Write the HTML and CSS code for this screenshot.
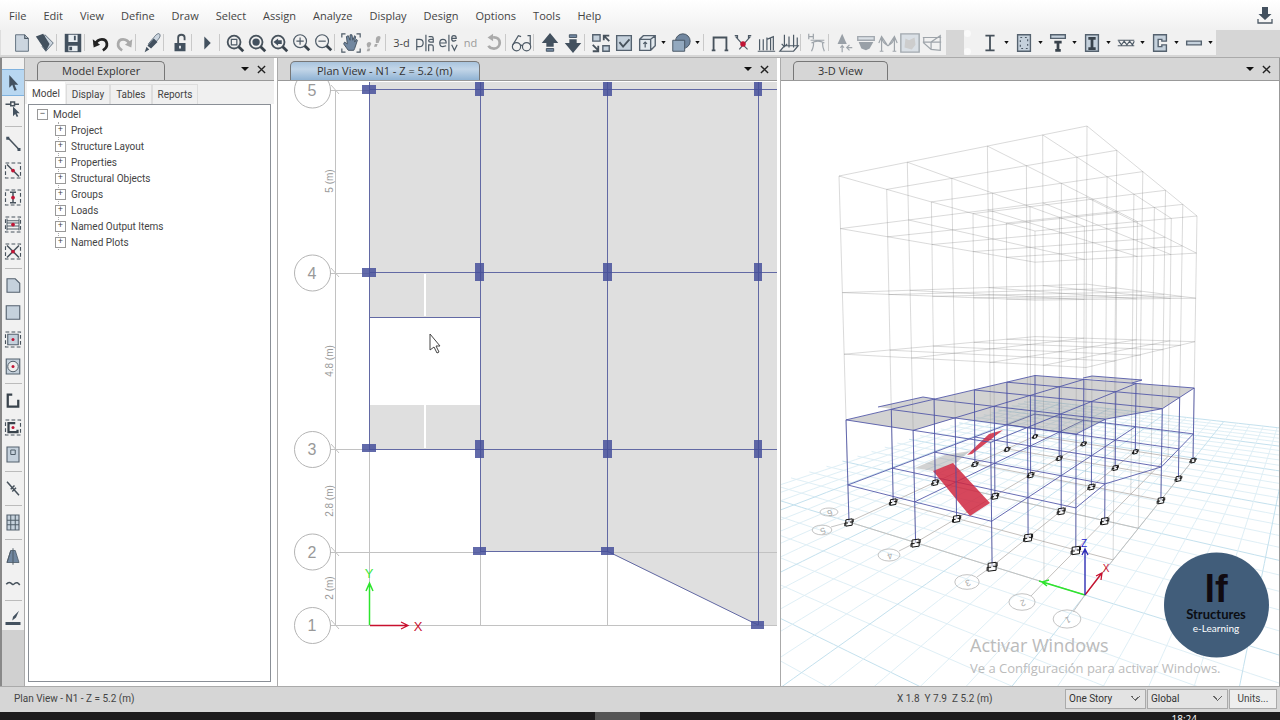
FILE: index.html
```html
<!DOCTYPE html>
<html lang="en">
<head>
<meta charset="utf-8">
<title>Plan View - N1</title>
<link rel="stylesheet" href="styles.css">
</head>
<body>
<div class="app">
<header class="menubar">
  <nav class="menus">
    <button>File</button><button>Edit</button><button>View</button><button>Define</button><button>Draw</button><button>Select</button><button>Assign</button><button>Analyze</button><button>Display</button><button>Design</button><button>Options</button><button>Tools</button><button>Help</button>
  </nav>
  <button class="tray" aria-label="Download"><svg viewBox="0 0 16 18"><path class="k" d="M5 1h6v7h3.500L8 14 1.500 8H5z"/><path class="s" d="M1 13v4h14v-4"/></svg></button>
</header>

<div class="toolrow">
 <div class="toolbar main-tools">
  <button aria-label="New"><svg viewBox="0 0 24 24"><path class="p" d="M5 3h10l4 4v14H5z"/><path class="s" d="M15 3v4h4"/></svg></button>
  <button aria-label="Open"><svg viewBox="0 0 24 24"><path class="p" d="M12 3l9 9-8 9-4-5z"/><path class="k" d="M2 5l8-3 7 11-4 8z"/></svg></button>
  <i></i>
  <button aria-label="Save"><svg viewBox="0 0 24 24"><path class="k" d="M3 2h18v20H3z"/><path class="w" d="M7 3h10v8H7zM7 15h10v6H7z"/><path class="k" d="M13 4h2v5h-2zM8 16h3v4H8z"/></svg></button>
  <i></i>
  <button aria-label="Undo"><svg viewBox="0 0 24 24"><path class="arc" d="M14 20c7-4 5-12-1-12-4 0-6 2-8 6"/><path class="b" d="M3 8l1 9 7-3z"/></svg></button>
  <button aria-label="Redo"><svg viewBox="0 0 24 24"><path class="arc dim" d="M10 20C3 16 5 8 11 8c4 0 6 2 8 6"/><path class="g" d="M21 8l-1 9-7-3z"/></svg></button>
  <i></i>
  <button aria-label="Refresh"><svg viewBox="0 0 24 24"><path class="p" d="M20 2c2 2 0 5-3 8l-6 6-3-3 6-7c2-3 5-5 6-4z"/><path class="k" d="M14 7l4 4-7 7-4-3zM6 16l3 3-5 3z"/></svg></button>
  <i></i>
  <button aria-label="Unlock"><svg viewBox="0 0 24 24"><path class="k" d="M6 12h12v9H6z"/><path class="s2" d="M10 12V6c0-4 7-4 7 0v3"/><path class="w" d="M11 15h2v3h-2z"/></svg></button>
  <i></i>
  <button aria-label="Run"><svg viewBox="0 0 24 24"><path class="k" d="M8 5l7 7-7 7z"/></svg></button>
  <i></i>
  <span class="compact">
  <button aria-label="Rubber band zoom"><svg viewBox="0 0 24 24"><circle class="s2" cx="11" cy="11" r="7"/><path class="s" d="M8 8h6v6H8z"/><path class="s3" d="M16 16l5 5"/></svg></button>
  <button aria-label="Full view"><svg viewBox="0 0 24 24"><circle class="s2" cx="11" cy="11" r="7"/><circle class="k" cx="11" cy="11" r="4"/><path class="s3" d="M16 16l5 5"/></svg></button>
  <button aria-label="Previous zoom"><svg viewBox="0 0 24 24"><circle class="s2" cx="11" cy="11" r="7"/><path class="k" d="M6 11l5-4v2h4v4h-4v2z"/><path class="s3" d="M16 16l5 5"/></svg></button>
  <button aria-label="Zoom in"><svg viewBox="0 0 24 24"><circle class="s" cx="11" cy="10" r="7"/><path class="s" d="M7 10h8M11 6v8"/><path class="s3" d="M16 15l5 5"/></svg></button>
  <button aria-label="Zoom out"><svg viewBox="0 0 24 24"><circle class="s" cx="11" cy="10" r="7"/><path class="s" d="M7 10h8"/><path class="s3" d="M16 15l5 5"/></svg></button>
  </span>
  <i></i>
  <button aria-label="Pan"><svg viewBox="0 0 24 24"><path class="s" d="M2 6V2h4M18 2h4v4M2 18v4h4M18 22h4v-4"/><path class="m" d="M9 20l-5-7 1-2 3 2-1-8 2-1 2 5V3h2l1 6 2-5 1 1-1 6 2-3 1 1-3 9-1 2z"/></svg></button>
  <button aria-label="Walk"><svg viewBox="0 0 24 24"><path class="g" d="M4 14c0-4 5-4 5-1l-2 4H5zM5 18h3l-1 3H4zM14 8c0-4 6-5 5-1l-2 5h-3zM13 13h3l-1 3h-3z"/></svg></button>
  <i></i>
  <button class="word">3-d</button>
  <button class="word" aria-label="Plan"><svg viewBox="0 0 24 24"><path class="s" d="M13 3v18M3 20V8h3q4 0 4 4t-4 4H3M16 5h3q2 0 2 2v4h-3q-2 0-2-1.500T18 8h3M16 21v-7h3q2 0 2 2v5"/></svg></button>
  <button class="word" aria-label="Elevation"><svg viewBox="0 0 24 24"><path class="s" d="M13 3v18M3 12h7q0-4-3.500-4T3 12q0 4 3.500 4L10 15M16 7h5q0-3-2.500-3T16 7q0 3 2.500 3L21 9M16 14l3 6 3-6"/></svg></button>
  <button class="word off">nd</button>
  <button aria-label="Rotate"><svg viewBox="0 0 24 24"><path class="arc dim" d="M11 6c10-1 9 12 1 12-3 0-5-1-6-3"/><path class="g" d="M11 2v8L5 6z"/></svg></button>
  <i></i>
  <button aria-label="Perspective"><svg viewBox="0 0 24 24"><circle class="s" cx="6" cy="16" r="4.500"/><circle class="s" cx="17" cy="16" r="4.500"/><path class="s" d="M2 14l6-10 3 1M21 14V4h-3M10 14l3 1"/></svg></button>
  <i></i>
  <button aria-label="Move up"><svg viewBox="0 0 24 24"><path class="k" d="M12 1l9 11h-5v4H8v-4H3z"/><path class="m" d="M8 18h8v3H8z"/></svg></button>
  <button aria-label="Move down"><svg viewBox="0 0 24 24"><path class="k" d="M12 23l9-11h-5V8H8v4H3z"/><path class="m" d="M8 3h8v3H8z"/></svg></button>
  <i></i>
  <button aria-label="Shrink objects"><svg viewBox="0 0 24 24"><path class="ps" d="M3 3h8v7H3zM14 15h7v6h-7z"/><path class="s2" d="M15 9V4h6M15 4l6 6M3 14l6 6M3 21h6v-6"/></svg></button>
  <button aria-label="View options"><svg viewBox="0 0 24 24"><path class="ps" d="M4 4h16v16H4z"/><path class="s2" d="M7 11l4 5 7-8"/></svg></button>
  <button aria-label="Object view"><svg viewBox="0 0 24 24"><path class="ps lt" d="M4 8l4-4h13v11l-5 5H4zM4 8h12v12M16 8l5-4"/><path class="s" d="M10 17v-6M8 13l2-2 2 2"/></svg></button><b></b>
  <button aria-label="Shading"><svg viewBox="0 0 24 24"><circle class="m" cx="14" cy="10" r="8"/><path class="m2" d="M3 9h13v12H3z"/></svg></button><b></b>
  <i></i>
  <button aria-label="Frame"><svg viewBox="0 0 24 24"><path class="s2" d="M5 20V6h14v14M3 20h4M17 20h4"/></svg></button>
  <button aria-label="Joint"><svg viewBox="0 0 24 24"><path class="s" d="M4 5l8 9 8-9M8 19l4-5 5 5M3 4h3v3M18 7V4h3"/><circle class="red" cx="12" cy="13" r="3"/></svg></button>
  <button aria-label="Area loads"><svg viewBox="0 0 24 24"><path class="s" d="M3 21h19M5 20V8M9 20V8M13 20V6M13 8l7-3v15M17 20V6"/></svg></button>
  <button aria-label="Line loads"><svg viewBox="0 0 24 24"><path class="s" d="M2 21h15l5-6H7zM7 3v12M12 5v12M17 3v14M21 6v9M4 13l3 3 3-3"/></svg></button>
  <i></i>
  <button class="off" aria-label="Deformed"><svg viewBox="0 0 24 24"><path class="s" d="M3 2v6M8 2v6M3 5h5M6 21q3-6 2-10M6 12q7-4 14 0M18 12q0 5 2 9M5 9h15"/></svg></button>
  <i></i>
  <span class="compact off">
  <button aria-label="Reactions"><svg viewBox="0 0 24 24"><path class="k" d="M10 2l5 11H5z"/><path class="s" d="M10 14v8M8 17l2-2 2 2M15 17h6M18 14l-3 3 3 3"/></svg></button>
  <button aria-label="Soil"><svg viewBox="0 0 24 24"><path class="ps" d="M3 5h18v4H3z"/><path class="k" d="M4 11h16l-4 7-4 2-5-2z"/></svg></button>
  <button aria-label="Forces"><svg viewBox="0 0 24 24"><path class="s" d="M5 21V6q1 6 7 9 6-3 7-9v15M2 12l3-7 6 9M22 12l-3-7-6 9M3 21h4M17 21h4"/></svg></button>
  <button aria-label="Shell forces"><svg viewBox="0 0 24 24"><path class="ps" d="M2 2h20v20H2z"/><path class="g" d="M7 7l4 2 6-3 1 8-4 5-8-2z"/></svg></button>
  <button aria-label="Diagram"><svg viewBox="0 0 24 24"><path class="s" d="M2 6h20M2 11h20M3 6v6l8 7 10 1V4l-10 7M11 11v8"/></svg></button>
  </span>
 </div>
 <div class="toolbar section-tools">
  <button aria-label="Steel frame"><svg viewBox="0 0 24 24"><path class="s2" d="M7 4h10M7 20h10M12 4v16"/></svg></button><b></b>
  <button aria-label="Concrete frame"><svg viewBox="0 0 24 24"><path class="ps" d="M5 3h14v18H5z"/><path class="s tiny" d="M8 6h8v12H8z"/></svg></button><b></b>
  <button aria-label="Composite beam"><svg viewBox="0 0 24 24"><path class="ps" d="M4 3h16v4H4z"/><path class="s3" d="M8 11h8M12 11v9M9 20h6"/></svg></button><b></b>
  <button aria-label="Composite column"><svg viewBox="0 0 24 24"><path class="ps" d="M5 3h14v18H5z"/><path class="s3" d="M8 7h8M12 7v11M8 18h8"/></svg></button><b></b>
  <button aria-label="Joist"><svg viewBox="0 0 24 24"><path class="s" d="M3 9h18M3 15h18M4 10l3 4 3-4 3 4 3-4 3 4 2-4"/></svg></button><b></b>
  <button aria-label="Wall"><svg viewBox="0 0 24 24"><path class="ps" d="M5 3h14v7h-5V8H10v8h4v-2h5v7H5z"/></svg></button><b></b>
  <button aria-label="Slab"><svg viewBox="0 0 24 24"><path class="ps" d="M4 10h16v4H4z"/></svg></button><b></b>
 </div>
</div>

<main class="work">
 <div class="rail">
  <button class="active" aria-label="Pointer"><svg viewBox="0 0 24 24"><path class="k" d="M7 2v17l4-4 3 8 3-1-3-7h5z"/></svg></button>
  <button aria-label="Reshape"><svg viewBox="0 0 24 24"><path class="s2" d="M2 5h7M14 5h6M9 2h5v5H9z"/><path class="k" d="M12 8v13l3-3 2 4 2-1-2-4h4z"/></svg></button>
  <hr>
  <button aria-label="Draw line"><svg viewBox="0 0 24 24"><path class="s2" d="M5 4l15 16"/><path class="k" d="M3 3h4v4H3zM18 18h4v4h-4z"/></svg></button>
  <button aria-label="Quick line"><svg viewBox="0 0 24 24"><path class="dash" d="M2 2h20v20H2z"/><path class="s2" d="M4 4l16 16"/><circle class="red" cx="12" cy="12" r="2.500"/></svg></button>
  <button aria-label="Quick column"><svg viewBox="0 0 24 24"><path class="dash" d="M2 2h20v20H2z"/><path class="s2" d="M8 5h8M12 5v14M8 19h8"/><circle class="red" cx="12" cy="12" r="2.500"/></svg></button>
  <button aria-label="Secondary beams"><svg viewBox="0 0 24 24"><path class="dash" d="M2 2h20v20H2z"/><path class="s" d="M4 4v16M20 4v16M4 7h16M4 10h16M4 14h16M4 18h16"/><circle class="red" cx="12" cy="12" r="2.500"/></svg></button>
  <button aria-label="Braces"><svg viewBox="0 0 24 24"><path class="dash" d="M2 2h20v20H2z"/><path class="s2" d="M4 4l16 16M20 4L4 20"/><circle class="red" cx="12" cy="12" r="2.500"/></svg></button>
  <hr>
  <button aria-label="Floor"><svg viewBox="0 0 24 24"><path class="ps" d="M4 3h11l6 6v12H4z"/></svg></button>
  <button aria-label="Rectangular floor"><svg viewBox="0 0 24 24"><path class="ps" d="M3 3h18v18H3z"/></svg></button>
  <button aria-label="Quick floor"><svg viewBox="0 0 24 24"><path class="ps" d="M5 5h14v14H5z"/><path class="dash" d="M2 2h20v20H2z"/><circle class="red" cx="12" cy="12" r="2"/></svg></button>
  <button aria-label="Opening"><svg viewBox="0 0 24 24"><path class="ps" d="M3 2h18v20H3z"/><circle class="w s" cx="12" cy="12" r="7"/><circle class="red" cx="12" cy="12" r="2"/></svg></button>
  <hr>
  <button aria-label="Walls"><svg viewBox="0 0 24 24"><path class="s3" d="M11 4H5v16h14v-9"/></svg></button>
  <button aria-label="Quick walls"><svg viewBox="0 0 24 24"><path class="dash" d="M2 2h20v20H2z"/><path class="s3" d="M15 6H6v12h12v-3"/><circle class="red" cx="12" cy="12" r="2"/></svg></button>
  <button aria-label="Wall opening"><svg viewBox="0 0 24 24"><path class="ps" d="M4 2h16v20H4z"/><path class="s" d="M9 6h6v6H9z"/></svg></button>
  <hr>
  <button aria-label="Link"><svg viewBox="0 0 24 24"><path class="s2" d="M4 3l16 18M9 13l5-5M11 16l5-5"/></svg></button>
  <hr>
  <button aria-label="Grid"><svg viewBox="0 0 24 24"><path class="ps" d="M4 2h16v20H4z"/><path class="s" d="M9 2v20M15 2v20M4 9h16M4 15h16"/></svg></button>
  <hr>
  <button aria-label="Tower"><svg viewBox="0 0 24 24"><path class="m" d="M9 4h6l5 16H4z"/><path class="s" d="M12 1v22M9 4L4 20"/></svg></button>
  <button aria-label="Tendon"><svg viewBox="0 0 24 24"><path class="s2" d="M3 13q4-5 8 0 2 1 3-1 4-3 7 2"/></svg></button>
  <hr>
  <button aria-label="Strip"><svg viewBox="0 0 24 24"><path class="k" d="M20 3l-4 9-5 4 1-5zM2 18h20v4H2z"/></svg></button>
 </div>

 <section class="pane explorer">
  <div class="dock"><h2>Model Explorer</h2><span class="dockbtns"><button aria-label="Options" class="drop"></button><button aria-label="Close"><svg viewBox="0 0 10 10"><path d="M1 1l8 8M9 1l-8 8"/></svg></button></span></div>
  <div class="subtabs"><button class="on">Model</button><button>Display</button><button>Tables</button><button>Reports</button></div>
  <div class="treebox">
   <ul class="tree"><li class="open"><button class="node minus">Model</button>
    <ul><li><button class="node">Project</button></li><li><button class="node">Structure Layout</button></li><li><button class="node">Properties</button></li><li><button class="node">Structural Objects</button></li><li><button class="node">Groups</button></li><li><button class="node">Loads</button></li><li><button class="node">Named Output Items</button></li><li><button class="node">Named Plots</button></li></ul>
   </li></ul>
  </div>
 </section>

 <section class="pane plan">
  <div class="dock"><h2 class="current">Plan View - N1 - Z = 5.2 (m)</h2><span class="dockbtns"><button aria-label="Options" class="drop"></button><button aria-label="Close"><svg viewBox="0 0 10 10"><path d="M1 1l8 8M9 1l-8 8"/></svg></button></span></div>
  <svg class="canvas" viewBox="278 81 499 605" preserveAspectRatio="xMinYMin slice">
   <path class="slab" d="M370 82H777V625H758L608 552H480V449H370V405H480V317H370z"/>
   <path class="joint" d="M425 274V316M425 405V448"/>
   <path class="axis" d="M330 90.500H370M330 273.500H370M330 449.500H370M330 552.500H480M330 625.500H777M608 552.500H777M369.500 449V625M480.500 552V625M607.500 552V625M335.500 90V625"/>
   <path class="axis" d="M331 85l8 9M331 268l8 9M331 444l8 9M331 547l8 9M331 620l8 9"/>
   <path class="beam" d="M369 89.500H777M369 272.500H777M369 449.500H777M369 317.500H480M369.500 82V449M480.500 82V551M607.500 82V551M758.500 82V625M480 551.500H608L758 625"/>
   <g class="col"><path d="M362 85h14v9h-14zM362 268h14v9h-14zM362 444h14v8h-14zM473 547h13v8h-13zM601 547h13v8h-13zM751 621h13v8h-13z"/><path d="M475 82h9v14h-9zM603 82h9v14h-9zM754 82h8v14h-8zM475 263h9v18h-9zM603 263h9v18h-9zM754 263h8v18h-8zM475 440h9v18h-9zM603 440h9v18h-9zM754 440h8v18h-8z"/></g>
   <g class="bubble"><circle cx="312.500" cy="90" r="18"/><circle cx="312.500" cy="273" r="18"/><circle cx="312.500" cy="449.500" r="18"/><circle cx="312.500" cy="552" r="18"/><circle cx="312.500" cy="625.500" r="18"/></g>
   <g class="num"><text x="312" y="96">5</text><text x="312" y="279">4</text><text x="312" y="455">3</text><text x="312" y="558">2</text><text x="312" y="631">1</text></g>
   <g class="dim-text"><text transform="translate(333 181) rotate(-90)">5 (m)</text><text transform="translate(333 361) rotate(-90)">4.8 (m)</text><text transform="translate(333 501) rotate(-90)">2.8 (m)</text><text transform="translate(333 588) rotate(-90)">2 (m)</text></g>
   <path class="gy" d="M369.500 625V584M366 591l3.500-8 3.500 8"/><path class="gx" d="M370 625.500H407M401 622l7 3.500-7 3.500"/>
   <text class="ty" x="369" y="578">Y</text><text class="tx" x="418" y="631">X</text>
   <path class="cursor" d="M430 334v16l4-3 3 6 2-1-3-6h4z"/>
  </svg>
 </section>

 <section class="pane view3d">
  <div class="dock"><h2>3-D View</h2><span class="dockbtns"><button aria-label="Options" class="drop"></button><button aria-label="Close"><svg viewBox="0 0 10 10"><path d="M1 1l8 8M9 1l-8 8"/></svg></button></span></div>
  <svg class="canvas" viewBox="781 81 498 605" preserveAspectRatio="xMinYMin slice">
   <g id="model"></g>
   <path class="gy" d="M1085 595l-46-14M1049 580l-7 2 5 4"/><path class="gx" d="M1085 595l16-21M1096 576l6-3-1 7"/><path class="gz" d="M1085 595v-46M1082 555l3-6 3 6"/>
   <text class="tx small" x="1106" y="572">X</text><text class="tz small" x="1084" y="547">Z</text>
   <text class="mark1" x="970" y="652">Activar Windows</text><text class="mark2" x="970" y="673">Ve a Configuración para activar Windows.</text>
   <circle class="disc" cx="1216.500" cy="605" r="52.500"/>
   <text class="logo" x="1216" y="602">lf</text><text class="brand" x="1216" y="619">Structures</text><text class="brand2" x="1216" y="632">e-Learning</text>
  </svg>
 </section>
</main>

<footer class="status">
 <span class="where">Plan View - N1 - Z = 5.2 (m)</span>
 <span class="coords">X 1.8&nbsp; Y 7.9&nbsp; Z 5.2 (m)</span>
 <select aria-label="Stories"><option>One Story</option></select><select aria-label="Coordinate system"><option>Global</option></select><button class="units">Units...</button>
</footer>
<div class="taskbar"><span class="task"></span><span class="clock">18:24</span></div>
</div>
<script src="scene.js"></script>
</body>
</html>
```
FILE: styles.css
```css
*{box-sizing:border-box}
body{margin:0;font:11px "Open Sans",sans-serif;color:#444;background:#d6d6d6}
button{font:inherit;color:inherit;background:none;border:0;padding:0;margin:0}
svg{display:block}
.app{display:flex;flex-direction:column;height:100vh;overflow:hidden}
.menubar{display:flex;justify-content:space-between;align-items:center;height:30px;padding:0 7px 0 9px;background:linear-gradient(#fff,#f1f1f1);flex:none}
.menus{display:flex;gap:17px;font-size:11px}
.tray svg{width:16px;height:18px}
.toolrow{display:flex;justify-content:space-between;height:27px;padding:0 64px 2px 0;background:#d6d6d6;flex:none}
.toolbar{display:flex;align-items:center;background:#f1f1f1}
.main-tools{padding:0 3px 0 9px;border-left:1px solid #ddd}
.section-tools{padding-left:7px;border-left:7px dotted #fafafa}
.toolbar button{width:23px;height:24px;display:grid;place-items:center;flex:none}
.toolbar svg{width:22px;height:22px}
.toolbar i{width:5px;height:17px;border-left:1px solid #c9c9c9}
.toolbar b{width:11px;height:3px;background:#111;clip-path:polygon(30% 0,70% 0,50% 100%)}
.compact{display:flex}
.toolbar .compact button{width:22px}
.word{font-size:11px}
.off{opacity:.5}
.k{fill:#43515f}.b{fill:#222}.g{fill:#aaa}.w{fill:#e9eef2}.m{fill:#7187a0;stroke:#43515f}.m2{fill:#93a9bf;stroke:#43515f}
.p{fill:#cbd5df;stroke:#5c6b7a}.ps{fill:#c5d1dc;stroke:#55626f;stroke-width:1.5}.lt{fill:#e2e9ee}
.s{fill:none;stroke:#4d5a66;stroke-width:1.3}.w.s{fill:#eee}.s2{fill:none;stroke:#47525c;stroke-width:2}.s3{fill:none;stroke:#39434c;stroke-width:3}
.arc{fill:none;stroke:#222;stroke-width:3}.dim{stroke:#aaa}
.red{fill:#c01535}.dash{fill:none;stroke:#47525c;stroke-width:1.5;stroke-dasharray:5 3}.tiny{stroke-dasharray:2 3}
.work{flex:1;min-height:0;display:grid;grid-template-columns:24px 253fr 503fr 500fr;border-top:1px solid #aaa}
.rail{display:flex;flex-direction:column;background:linear-gradient(#f1f1f1 572px,#d0d0d0 572px);border-left:2px solid #888;padding-top:11px}
.rail button{height:27px;display:grid;place-items:center;flex:none}
.rail svg{width:18px;height:21px}
.rail hr{width:17px;height:1px;border:0;background:#bbb;margin:3px auto;flex:none}
.rail .active{background:#b8d7f1;border:1px solid #7fb2df;border-width:1px 0}
.pane{display:flex;flex-direction:column;min-width:0;min-height:0;background:#fff;border-left:1px solid #aaa}
.explorer{border-right:3px solid #fff}
.plan{border-right:3px solid #fff}
.view3d{border-right:1px solid #999}
.dock{height:23px;flex:none;background:#d6d6d6;border-bottom:1px solid #999;display:flex;justify-content:space-between;align-items:end;padding:0 8px 0 12px}
.dock h2{margin:0;font-size:11px;font-weight:400;line-height:17px;height:19px;border:1px solid #777;border-bottom:0;border-radius:5px 5px 0 0;padding:0 24px;color:#333}
.dock h2.current{padding:0 26px;background:linear-gradient(#a9c4de,#c3d6e8 40%,#90b3d4)}
.dockbtns{display:flex;gap:8px;align-items:center;height:22px}
.dockbtns svg{width:9px;height:9px;stroke:#222;stroke-width:1.5}
.drop{width:8px;height:4px;background:#111;clip-path:polygon(0 0,100% 0,50% 100%)}
.subtabs{display:flex;height:23px;align-items:end;background:#f0f0f0;padding-left:1px;flex:none}
.subtabs button{height:20px;padding:0 5px;border:1px solid #ddd;border-bottom:0;font:10px Roboto,sans-serif}
.subtabs .on{background:#fff;height:23px;border-color:#eee}
.treebox{flex:1;margin:0 3px 4px;border:1px solid #8a8f96;background:#fff;padding:1px 0 0 8px}
.tree,.tree ul{list-style:none;margin:0;padding:0;font:10px Roboto,sans-serif}
.tree ul{margin-left:21px;border-left:1px dotted #aaa;padding:0}
.tree ul li{margin-left:-4px}
.node{display:flex;align-items:center;height:16px;gap:5px}
.node::before{content:"+";width:9px;height:9px;border:1px solid #999;background:#fff;font:9px/6px "Liberation Sans",sans-serif;text-align:center}
.node.minus::before{content:"−"}
.canvas{flex:1;min-height:0;width:100%}
.slab{fill:#dfdfdf}.joint{stroke:#fff;stroke-width:2}.axis{fill:none;stroke:#c2c2c2}
.beam{fill:none;stroke:#6269a4;stroke-width:1}.col{fill:#46509b;fill-opacity:.85}
.bubble{fill:none;stroke:#b4b4b4}
.num,.dim-text{font-family:"Liberation Sans",sans-serif;fill:#999;text-anchor:middle}.num{font-size:16px}.dim-text{font-size:10px}
.gy{fill:none;stroke:#2de52d;stroke-width:1.5}.gx{fill:none;stroke:#c8102e;stroke-width:1.3}.gz{fill:none;stroke:#2828b8;stroke-width:1.3}
.ty,.tx,.tz{font:13px "Liberation Sans",sans-serif;text-anchor:middle;fill:#3be83b}.tx{fill:#c8102e}.tz{fill:#2828d0}.small{font-size:10px}
.cursor{fill:#fff;stroke:#444}
.ground{fill:none;stroke:#dfeff6}.ground.major{stroke:#c4e1ee}
.wire{fill:none;stroke:#777;stroke-opacity:.27}
.base{fill:none;stroke:#c4c0bd}
.floor{fill:#888;fill-opacity:.38}.steel{fill:none;stroke:#4c52a6;stroke-opacity:.85;stroke-width:1}
.stair{fill:#cf2740;fill-opacity:.85}.foot{fill:#fff;fill-opacity:.5;stroke:#111;stroke-width:1}
.tag{fill:none;stroke:#c4c4c4}.tagtext{font:9px "Liberation Sans",sans-serif;fill:#aaa;text-anchor:middle}
.mark1{font:18px "Open Sans",sans-serif;fill:#bbb}.mark2{font:13px "Open Sans",sans-serif;fill:#bbb}
.disc{fill:#415d7a}
.logo{font:bold 38px "Liberation Sans",sans-serif;fill:#100a10;text-anchor:middle}
.brand{font:bold 13px Lato,sans-serif;fill:#0b0d12;text-anchor:middle}.brand2{font:10px Lato,sans-serif;fill:#fff;text-anchor:middle}
.status{display:flex;align-items:center;height:26px;padding:0 3px 2px 14px;border-top:1px solid #aaa;background:#d6d6d6;flex:none;font:10px Roboto,sans-serif}
.where{flex:1}.coords{width:168px}
.status select{appearance:none;width:81px;height:20px;margin-right:1px;border:1px solid #aaa;border-radius:0;font:inherit;color:#333;padding:0 3px;background:linear-gradient(45deg,transparent 45%,#666 45% 60%,transparent 60%) right 9px center/5px 5px no-repeat,linear-gradient(-45deg,transparent 45%,#666 45% 60%,transparent 60%) right 5px center/5px 5px no-repeat,#e3e3e3}
.units{width:48px;height:20px;border:1px solid #aaa;background:#eee}
.taskbar{position:relative;height:8px;flex:none;background:#1c1b1c;overflow:hidden;display:flex;justify-content:flex-end;padding-right:83px}
.task{position:absolute;left:46.5%;width:45px;height:8px;background:#555}
.clock{color:#fff;font-size:10px;line-height:14px}
```
FILE: scene.js
```js
const NS = "http://www.w3.org/2000/svg";
const model = document.getElementById("model");

function add(name, cls, attrs, text) {
  const el = document.createElementNS(NS, name);
  el.setAttribute("class", cls);
  for (const key in attrs) el.setAttribute(key, attrs[key]);
  if (text) el.textContent = text;
  model.appendChild(el);
}

// Projective map from the unit square to four screen corners.
function plane(p0, p1, p2, p3) {
  const d1 = [p1[0] - p2[0], p1[1] - p2[1]];
  const d2 = [p3[0] - p2[0], p3[1] - p2[1]];
  const s = [p0[0] - p1[0] + p2[0] - p3[0], p0[1] - p1[1] + p2[1] - p3[1]];
  const den = d1[0] * d2[1] - d2[0] * d1[1];
  const g = (s[0] * d2[1] - d2[0] * s[1]) / den;
  const h = (d1[0] * s[1] - s[0] * d1[1]) / den;
  return (t, u) => {
    const w = 1 + g * t + h * u;
    return [0, 1].map(k => (p0[k] + (p1[k] * (1 + g) - p0[k]) * t + (p3[k] * (1 + h) - p0[k]) * u) / w).concat(w);
  };
}

const roof = plane([1087, 126], [1197, 216], [1035, 231], [839, 176]);
const ground = plane([1085, 595], [1193, 460], [1035, 436], [849, 522]);
const W = 19, D = 14.6;
const xs = [0, 3, 6.5, 10.6, 14.7, 19];
const ys = [0, 2, 4.8, 9.6, 14.6];

function node(i, j, f) {
  const a = roof(xs[i] / W, ys[j] / D), b = ground(xs[i] / W, ys[j] / D);
  return [a[0] + (b[0] - a[0]) * f, a[1] + (b[1] - a[1]) * f];
}
const path = pts => "M" + pts.map(p => p[0].toFixed(1) + " " + p[1].toFixed(1)).join("L");

function groundLine(at, from, to, major) {
  const pts = [];
  for (let k = 0; k <= 80; k++) {
    const p = at(from + (to - from) * k / 80);
    if (p[2] > 0.15) pts.push(p);
  }
  if (pts.length > 1) add("path", major ? "ground major" : "ground", { d: path(pts) });
}
const step = 1.3;
for (let n = -14; n <= 25; n++) groundLine(v => ground(n * step / W, v / D), -36, 24, n % 5 === 0);
for (let n = -28; n <= 18; n++) groundLine(v => ground(v / W, n * step / D), -18.2, 32.5, n % 5 === 0);

function gridAt(f, cls) {
  xs.forEach((_, i) => add("path", cls, { d: path([node(i, 0, f), node(i, 4, f)]) }));
  ys.forEach((_, j) => add("path", cls, { d: path([node(0, j, f), node(5, j, f)]) }));
}
gridAt(1, "base");
[0, 0.152, 0.337, 0.515].forEach(f => gridAt(f, "wire"));
xs.forEach((_, i) => ys.forEach((_, j) => add("path", "wire", { d: path([node(i, j, 0), node(i, j, 1)]) })));

const tags = [[829, 512, "6"], [822, 530, "5"], [889, 555, "4"], [967, 582, "3"], [1022, 602, "2"], [1067, 619, "1"]];
tags.forEach(([x, y, label]) => {
  const r = 8 + (y - 512) / 22;
  add("ellipse", "tag", { cx: x, cy: y, rx: r + 1, ry: r / 2 + (y - 512) / 40 });
  add("text", "tagtext", { transform: `translate(${x} ${y - 2}) rotate(160)` }, label);
});
[[4, 831, 527], [3, 899, 551], [2, 977, 577], [1, 1031, 596], [0, 1073, 612]].forEach(([j, x, y]) =>
  add("path", "tag", { d: path([node(0, j, 1), [x, y]]) }));

const low = 0.893, top2 = 0.705;
const outline = [[0, 4], [0, 3], [1, 3], [1, 1], [2, 1], [3, 0], [5, 0], [5, 2], [5, 4]];
const spansX = [[4, 0, 5], [3, 0, 5], [2, 0, 5], [1, 1, 2], [0, 3, 5]];
const spansY = [[0, 2, 4], [1, 1, 4], [2, 1, 4], [3, 0, 4], [4, 0, 4], [5, 0, 4]];
function beams(f) {
  spansX.forEach(([j, a, b]) => add("path", "steel", { d: path([node(a, j, f), node(b, j, f)]) }));
  spansY.forEach(([i, a, b]) => add("path", "steel", { d: path([node(i, a, f), node(i, b, f)]) }));
  add("path", "steel", { d: path([node(2, 1, f), node(3, 0, f)]) });
}
beams(low);
add("path", "floor", { d: "M915 468L945 455 970 451 956 463 933 471z" });
add("path", "stair", { d: "M933 471L953 463 990 503 970 516z" });
add("path", "stair", { d: "M967 455L989 434 1003 430 972 454z" });
add("path", "floor", { d: path(outline.map(([i, j]) => node(i, j, top2))) + "z" });
add("path", "floor", { d: "M878 407L923 397 935 399 893 409z" });
add("path", "floor", { d: "M1083 378L1092 376 1142 380 1132 383z" });
add("path", "steel", { d: "M1083 378L1092 376 1142 380 1132 383M878 407L923 397 935 399" });
beams(top2);

const columns = [];
for (let i = 0; i < 6; i++) for (let j = 2; j < 5; j++) columns.push([i, j]);
columns.push([1, 1], [2, 1], [3, 0], [4, 0], [5, 0]);
columns.forEach(([i, j]) => {
  const a = node(i, j, top2), b = node(i, j, 1);
  add("path", "steel", { d: path([a, b]) });
  const r = 1.5 + (b[1] - 430) / 55;
  const [x, y] = b;
  add("path", "foot", { d: `M${x - r} ${y - r + 1}l${2 * r} -1v${2 * r}l${-2 * r} 1zM${x - r - 1} ${y + r + 1}v${-r}h${r}M${x + r + 1} ${y - r}v${r}h${-r}` });
});
```
